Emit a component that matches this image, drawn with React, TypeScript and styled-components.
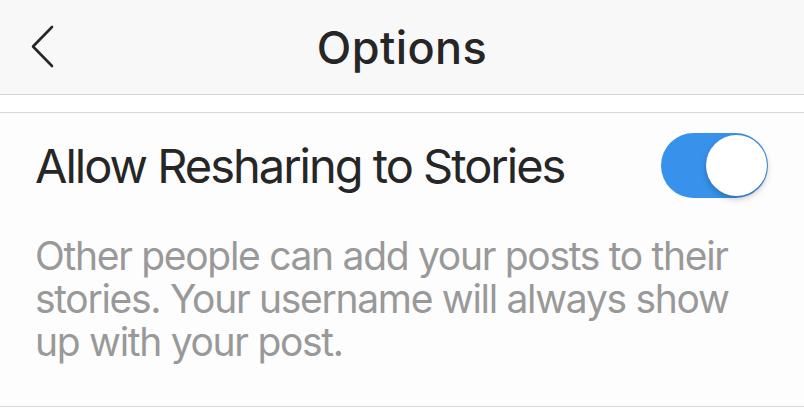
import React from 'react'
import styled, { createGlobalStyle } from 'styled-components'

const GlobalStyle = createGlobalStyle`
  body {
    margin: 0;
    background: #ffffff;
    font-family: Inter, "Noto Sans", "Liberation Sans", sans-serif;
    -webkit-font-smoothing: antialiased;
  }
`

const Page = styled.div`
  width: 804px;
  height: 418px;
  overflow: hidden;
  background: #ffffff;
`

const Header = styled.header`
  height: 94px;
  display: grid;
  grid-template-columns: 1fr auto 1fr;
  align-items: center;
  background: #f8f8f8;
  border-bottom: 1px solid #d4d4d4;
`

const BackButton = styled.button`
  justify-self: start;
  display: flex;
  align-items: center;
  margin-left: 30px;
  padding: 0;
  border: none;
  background: none;
  color: #262626;
`

const Title = styled.h1`
  margin: 0;
  font-size: 45px;
  font-weight: 500;
  color: #262626;
  letter-spacing: 0.4px;
`

const Spacer = styled.div`
  height: 17px;
  background: #ffffff;
`

const Section = styled.section`
  background: #fdfdfd;
  border-top: 1px solid #d8d8d8;
  border-bottom: 1px solid #d8d8d8;
  padding: 20px 36px 43px 35px;
`

const Row = styled.div`
  display: flex;
  align-items: center;
  justify-content: space-between;
  height: 64px;
`

const Label = styled.span`
  font-size: 47px;
  letter-spacing: -2px;
  color: #262626;
`

const Toggle = styled.div<{ $on: boolean }>`
  position: relative;
  width: 107px;
  height: 65px;
  border-radius: 33px;
  background: ${(p) => (p.$on ? '#3892ec' : '#e5e5e5')};
`

const Knob = styled.div<{ $on: boolean }>`
  position: absolute;
  top: 2px;
  left: ${(p) => (p.$on ? '45px' : '2px')};
  width: 61px;
  height: 61px;
  border-radius: 50%;
  background: #ffffff;
  box-shadow: 0 3px 6px rgba(0, 0, 0, 0.22), 0 0 1px rgba(0, 0, 0, 0.15);
`

const Description = styled.p`
  margin: 37px 0 0;
  max-width: 740px;
  font-size: 39px;
  line-height: 43px;
  letter-spacing: -1.3px;
  color: #999999;
`

const App = (): JSX.Element => {
  return (
    <Page>
      <GlobalStyle />
      <Header>
        <BackButton aria-label="Back">
          <svg width="26" height="44" viewBox="0 0 26 44">
            <polyline
              points="22,2 3,21.5 22,41"
              fill="none"
              stroke="currentColor"
              strokeWidth="2.6"
              strokeLinecap="round"
              strokeLinejoin="round"
            />
          </svg>
        </BackButton>
        <Title>Options</Title>
        <div />
      </Header>
      <Spacer />
      <Section>
        <Row>
          <Label>Allow Resharing to Stories</Label>
          <Toggle $on>
            <Knob $on />
          </Toggle>
        </Row>
        <Description>
          Other people can add your posts to their stories. Your username will always show up
          with your post.
        </Description>
      </Section>
    </Page>
  )
}

export default App
